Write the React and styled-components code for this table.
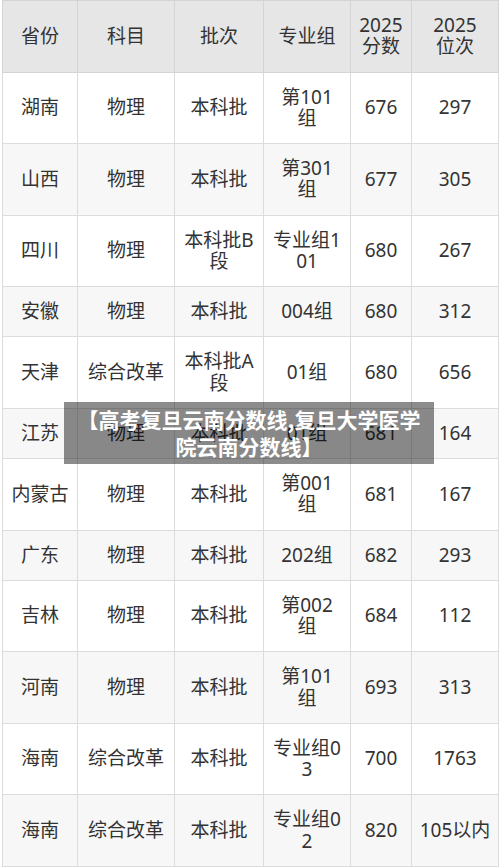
import React from 'react';
import styled, { createGlobalStyle } from 'styled-components';

const GlobalStyle = createGlobalStyle`
  html, body {
    margin: 0;
    padding: 0;
    background: #fff;
  }
  body {
    font-family: "Noto Sans", "Noto Sans CJK SC", sans-serif;
  }
`;

const Page = styled.div`
  position: relative;
  width: 500px;
  height: 867px;
  padding: 0 2px;
  box-sizing: border-box;
  overflow: hidden;
`;

const Table = styled.table`
  width: 496px;
  border-collapse: collapse;
  table-layout: fixed;
  color: #333;
  font-size: 19px;
  line-height: 21.25px;
`;

const HeadCell = styled.th`
  font-weight: normal;
  background: #e6e6e6;
  border: 1px solid #d4d4d4;
  padding: 14px 8px;
  text-align: center;
  vertical-align: middle;
  word-break: break-all;
  &:first-child,
  &:last-child {
    padding: 14px 6px;
  }
`;

const Row = styled.tr`
  background: #fff;
  &:nth-child(even) {
    background: #f7f7f7;
  }
`;

const Cell = styled.td`
  border: 1px solid #dcdcdc;
  padding: 14px 8px;
  text-align: center;
  vertical-align: middle;
  word-break: break-all;
  &:first-child,
  &:last-child {
    padding: 14px 5px;
  }
`;

const Caption = styled.div`
  position: absolute;
  left: 64px;
  top: 402px;
  width: 370px;
  height: 62px;
  box-sizing: border-box;
  padding: 4px 10px;
  background: rgba(0, 0, 0, 0.45);
  color: #fff;
  font-family: "Noto Sans CJK SC", sans-serif;
  font-weight: bold;
  font-size: 21px;
  line-height: 27px;
  text-align: center;
`;

const columns = [
  { label: ['省份'], width: 75 },
  { label: ['科目'], width: 97 },
  { label: ['批次'], width: 89 },
  { label: ['专业组'], width: 87 },
  { label: ['2025', '分数'], width: 61 },
  { label: ['2025', '位次'], width: 87 },
];

const rows = [
  ['湖南', '物理', '本科批', '第101组', '676', '297'],
  ['山西', '物理', '本科批', '第301组', '677', '305'],
  ['四川', '物理', '本科批B段', '专业组101', '680', '267'],
  ['安徽', '物理', '本科批', '004组', '680', '312'],
  ['天津', '综合改革', '本科批A段', '01组', '680', '656'],
  ['江苏', '物理', '本科批', '01组', '681', '164'],
  ['内蒙古', '物理', '本科批', '第001组', '681', '167'],
  ['广东', '物理', '本科批', '202组', '682', '293'],
  ['吉林', '物理', '本科批', '第002组', '684', '112'],
  ['河南', '物理', '本科批', '第101组', '693', '313'],
  ['海南', '综合改革', '本科批', '专业组03', '700', '1763'],
  ['海南', '综合改革', '本科批', '专业组02', '820', '105以内'],
];

export default function App() {
  return (
    <>
      <GlobalStyle />
      <Page>
        <Table>
          <colgroup>
            {columns.map((c, i) => (
              <col key={i} style={{ width: c.width }} />
            ))}
          </colgroup>
          <thead>
            <tr>
              {columns.map((c, i) => (
                <HeadCell key={i}>
                  {c.label.map((part, k) => (
                    <React.Fragment key={k}>
                      {k > 0 && <br />}
                      {part}
                    </React.Fragment>
                  ))}
                </HeadCell>
              ))}
            </tr>
          </thead>
          <tbody>
            {rows.map((r, i) => (
              <Row key={i}>
                {r.map((v, j) => (
                  <Cell key={j}>{v}</Cell>
                ))}
              </Row>
            ))}
          </tbody>
        </Table>
        <Caption>【高考复旦云南分数线,复旦大学医学院云南分数线】</Caption>
      </Page>
    </>
  );
}
